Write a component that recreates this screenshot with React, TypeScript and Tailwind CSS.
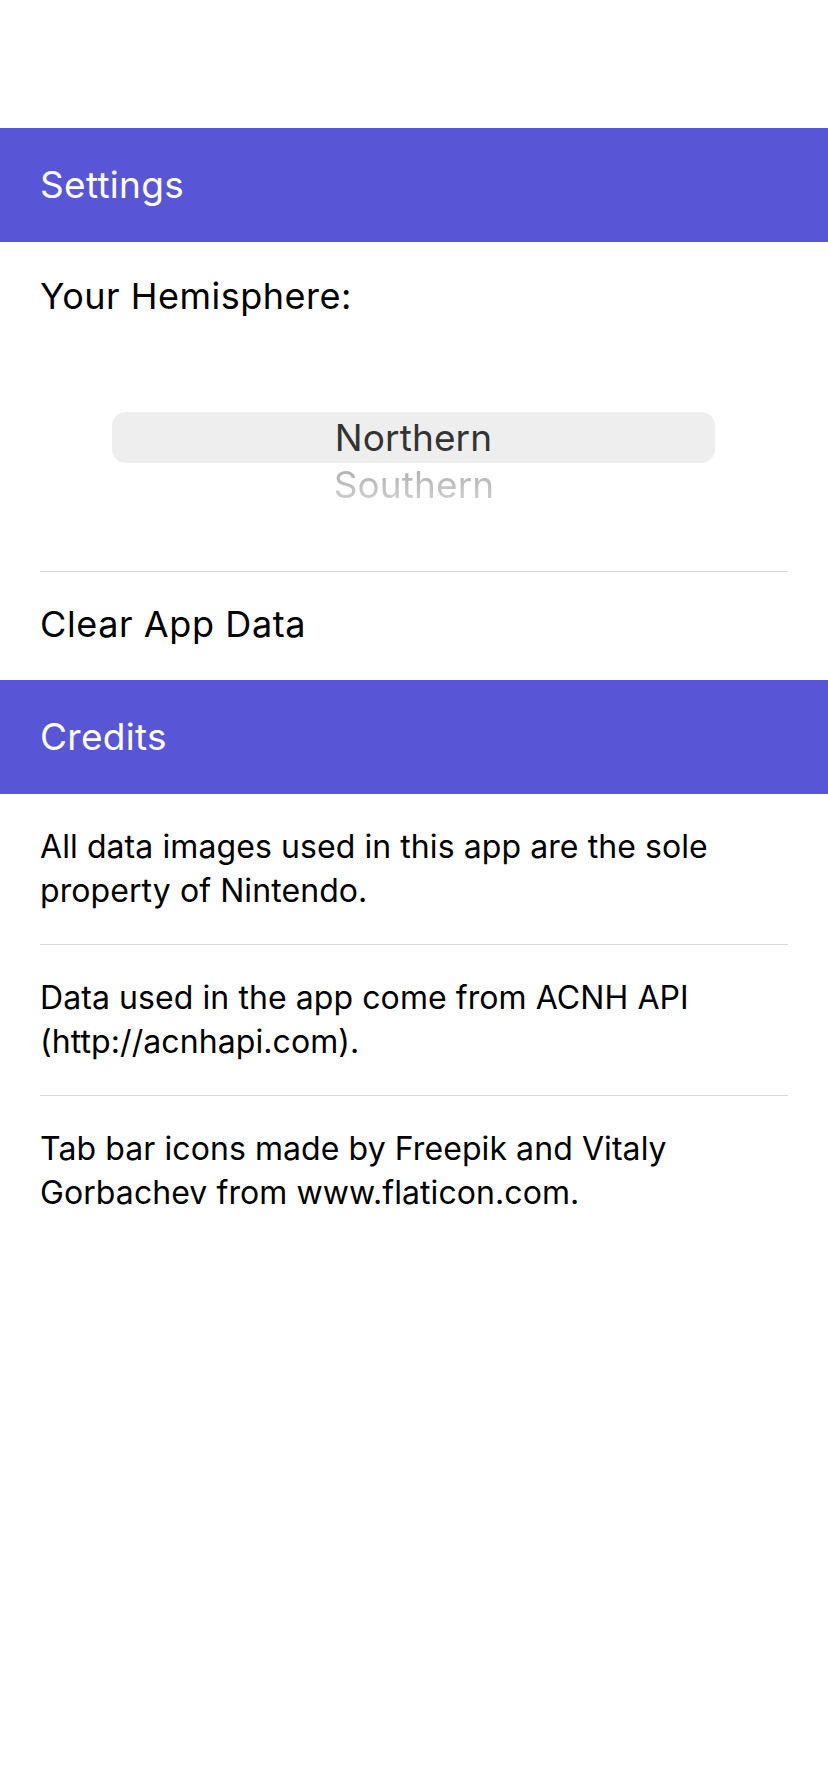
import React from "react";

const font = { fontFamily: 'Inter, "Noto Sans", "Liberation Sans", sans-serif' };

function Header({ title }: { title: string }) {
  return (
    <div className="h-[114px] bg-[#5856d6] px-[40px] flex items-center">
      <span className="text-white text-[37px] leading-[44px] tracking-[0.3px]">{title}</span>
    </div>
  );
}

function Sep() {
  return <div className="mx-[40px] h-px bg-[#d9d9d9]" />;
}

function CreditRow({ text }: { text: string }) {
  return (
    <div className="px-[40px] py-[31px] text-[32px] leading-[44px] text-black tracking-[0.08px]">
      {text}
    </div>
  );
}

export default function App() {
  return (
    <div className="w-[828px] h-[1792px] bg-white" style={font}>
      <div className="h-[128px]" />
      <Header title="Settings" />
      <div className="h-[108px] px-[40px] flex items-center">
        <span className="text-[36px] leading-[44px] text-black tracking-[0.5px]">Your Hemisphere:</span>
      </div>
      <div className="h-[221px] pt-[62px]">
        <div className="mx-[112px] w-[603px] h-[51px] rounded-[14px] bg-[#eeeeee] flex items-center justify-center">
          <span className="text-[37px] leading-[44px] text-[#333333] tracking-[0.1px]">Northern</span>
        </div>
        <div className="flex justify-center -mt-[2px]">
          <span className="text-[37px] leading-[48px] tracking-[0.1px] bg-gradient-to-b from-[#aaaaaa] to-[#d6d6d6] bg-clip-text text-transparent">
            Southern
          </span>
        </div>
      </div>
      <Sep />
      <div className="h-[108px] px-[40px] pb-[4px] flex items-center">
        <span className="text-[36px] leading-[44px] text-black tracking-[0.6px]">Clear App Data</span>
      </div>
      <Header title="Credits" />
      <CreditRow text="All data images used in this app are the sole property of Nintendo." />
      <Sep />
      <CreditRow text="Data used in the app come from ACNH API (http://acnhapi.com)." />
      <Sep />
      <CreditRow text="Tab bar icons made by Freepik and Vitaly Gorbachev from www.flaticon.com." />
    </div>
  );
}
